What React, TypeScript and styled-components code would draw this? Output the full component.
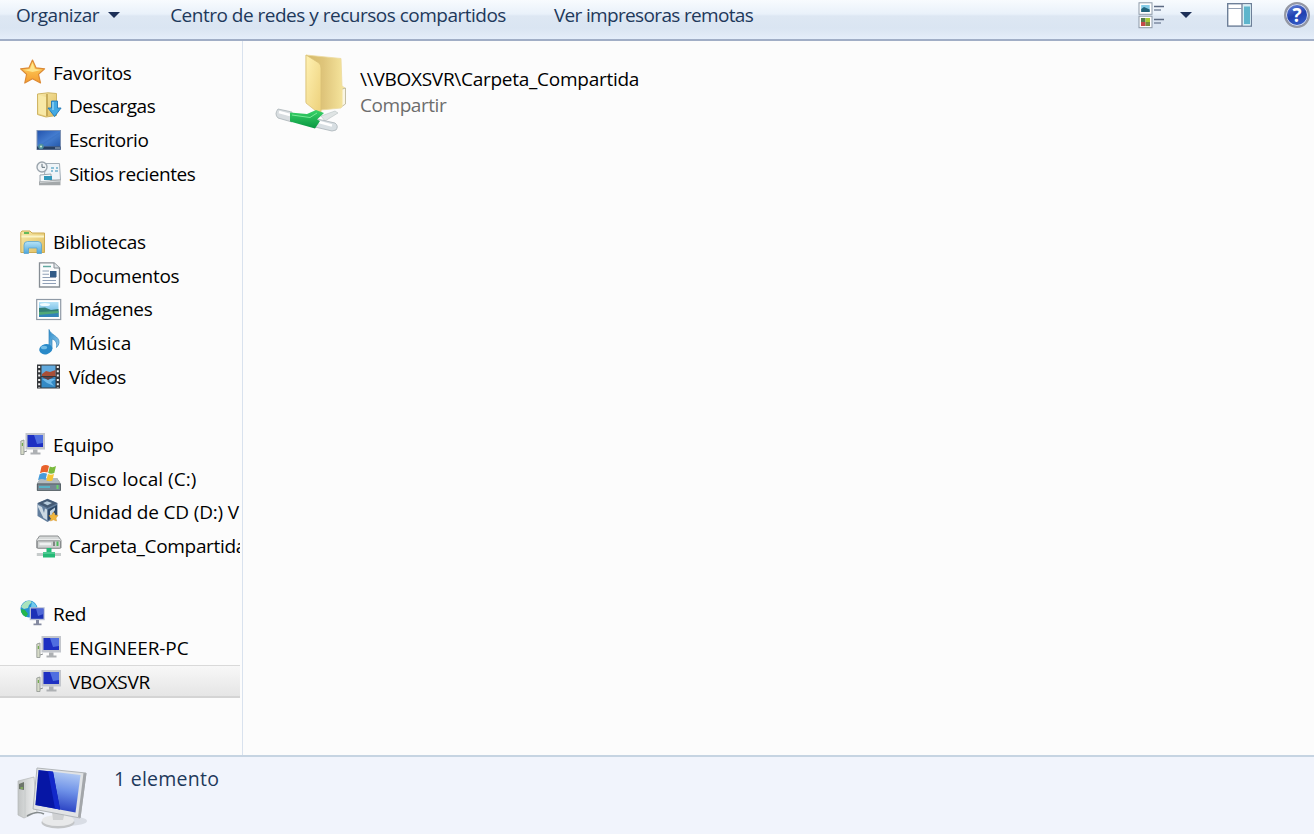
import React from 'react';
import styled, { createGlobalStyle } from 'styled-components';

const Global = createGlobalStyle`
  html, body { margin: 0; padding: 0; overflow: hidden; }
  body { font-family: "Open Sans", "Noto Sans", sans-serif; font-size: 19px; background: #fcfcfc; }
  * { box-sizing: border-box; }
`;

const Window = styled.div`
  display: flex;
  flex-direction: column;
  height: 834px;
  width: 1314px;
  background: #fcfcfc;
  overflow: hidden;
`;

const Toolbar = styled.header`
  display: flex;
  align-items: center;
  height: 41px;
  flex: none;
  padding: 0 4px 9px 16px;
  border-bottom: 2px solid #a1aec6;
  background: linear-gradient(#f8fbfe 0, #e9f1fa 14px, #dde7f3 16px, #dae5f2 28px, #e2ebf7 36px, #e4eefb 39px);
  color: #1e395b;
`;

const Command = styled.div<{ $track: number; $gap: number }>`
  display: flex;
  align-items: center;
  white-space: nowrap;
  line-height: 30px;
  letter-spacing: ${p => p.$track}px;
  margin-right: ${p => p.$gap}px;
`;

const Caret = styled.span<{ $left: number }>`
  width: 0;
  height: 0;
  margin-left: ${p => p.$left}px;
  border: 6px solid transparent;
  border-top-color: #1c2f57;
  border-bottom: 0;
`;

const Tools = styled.div`
  display: flex;
  align-items: center;
  margin-left: auto;
`;

const ToolButton = styled.div<{ $gap: number }>`
  display: flex;
  margin-right: ${p => p.$gap}px;
`;

const Body = styled.div`
  display: flex;
  flex: 1;
  min-height: 0;
`;

const Sidebar = styled.nav`
  width: 243px;
  flex: none;
  border-right: 1px solid #d9e2ee;
  padding: 14.7px 2px 0 0;
`;

const Group = styled.section`
  padding-bottom: 33.84px;
`;

const Row = styled.div<{ $child?: boolean; $selected?: boolean }>`
  display: flex;
  align-items: center;
  height: 33.84px;
  padding-left: ${p => (p.$child ? 36 : 20)}px;
  overflow: hidden;
  color: #000;
  ${p => p.$selected && `
    background: linear-gradient(#f8f8f8, #e4e4e4);
    box-shadow: inset 0 1px #d9d9d9, inset 0 -2px #d4d4d4;
  `}
`;

const IconBox = styled.span`
  display: flex;
  width: 26px;
  height: 26px;
  flex: none;
  margin: 0 7px 2px 0;
`;

const Label = styled.span<{ $track: number }>`
  white-space: nowrap;
  line-height: 26px;
  letter-spacing: ${p => p.$track}px;
`;

const Content = styled.main`
  flex: 1;
  padding: 12px 0 0 32px;
`;

const ShareItem = styled.div`
  display: flex;
  gap: 13px;
`;

const ShareText = styled.div`
  display: flex;
  flex-direction: column;
  padding-top: 13px;
`;

const Muted = styled(Label)`
  color: #6d6d6d;
`;

const Details = styled.footer`
  display: flex;
  height: 79px;
  flex: none;
  gap: 25px;
  padding: 9px 0 0 17px;
  border-top: 2px solid #c6d4e2;
  background: #f1f4fc;
  color: #1e395b;
  font-size: 19.5px;
`;

type IconName =
  | 'star' | 'downloads' | 'desktop' | 'recent' | 'libraries' | 'document' | 'picture'
  | 'music' | 'video' | 'computer' | 'disk' | 'cd' | 'netdrive' | 'network';

const drawings: Record<IconName, React.ReactNode> = {
  star: (
    <>
      <path d="M12.5 1 16 8.8 24.6 9.8 18.5 15.4 20.5 24 12.5 19.8 4.8 24 6.6 15.4.6 9.8 9 8.8Z" fill="url(#gStar)" stroke="#dc8a35" strokeWidth="1.2" strokeLinejoin="round" />
      <path d="M12.5 4 14.8 10 21 11 12.5 13 4 11 10 10Z" fill="#ffee9b" opacity=".8" />
    </>
  ),
  downloads: (
    <>
      <path d="M1.5 2 12 .8 20.5 1.5V23.5L10 25 1.5 22.5Z" fill="url(#gFold)" stroke="#cfb565" />
      <path d="M11 2v22" stroke="#bd9f4c" strokeWidth="1.5" />
      <path d="M2.5 3 10 5V24L2.5 21.5Z" fill="#f8e9a7" />
      <path d="M15.5 9h6v7h3.6L18.6 24.6 12 16h3.5Z" fill="#43a9e3" stroke="#2277b5" strokeWidth=".9" />
      <path d="M17 10v8" stroke="#a0ddf8" strokeWidth="1.2" />
    </>
  ),
  desktop: (
    <>
      <rect x=".5" y="4" width="24.5" height="20" fill="#7e92b4" />
      <rect x="1.5" y="5" width="22.5" height="15.5" fill="url(#gDesk)" />
      <path d="M1.5 20.5 24 6V20.5Z" fill="#1e4f9f" opacity=".2" />
      <rect x="1" y="20.5" width="23.5" height="3" fill="#273f61" />
      <circle cx="5" cy="20.5" r="2.8" fill="#4d8e9d" />
      <circle cx="5" cy="20.5" r="1.1" fill="#c4e5c9" />
      <path d="M19 22h5" stroke="#a7bbcf" />
    </>
  ),
  recent: (
    <>
      <path d="M9.5 3.5H23.5L24.5 20H8Z" fill="#eef4f8" stroke="#a3aeb7" />
      <path d="M15 8h3M20 8h2M15 11h2M19 11h3" stroke="#6caecb" strokeWidth="1.6" />
      <path d="M4 15 15 14V22H4Z" fill="#f4f8fa" stroke="#9ca7ae" />
      <path d="M8 16h8v4H8Z" fill="#3398ba" />
      <path d="M3 21.5 24.5 19.5V25.3H3Z" fill="#a3a8aa" />
      <path d="M4 22.3 24 21" stroke="#d8dcde" />
      <circle cx="6" cy="7" r="5" fill="#f1f4f6" stroke="#9ba5ad" strokeWidth="1.4" />
      <path d="M6 3.8V7.3H9" fill="none" stroke="#5c6d79" />
    </>
  ),
  libraries: (
    <>
      <path d="M.8 4.5 2 3H10L12 5H24.5V24.5H.8Z" fill="url(#gFold)" stroke="#cdab52" />
      <path d="M4 5H9" stroke="#64b95a" strokeWidth="2" />
      <path d="M1.5 8.5H24" stroke="#fbf4c7" strokeWidth="2" />
      <path d="M4 25.5V17Q4 13.5 7.5 13.5H18Q21.5 13.5 21.5 17V25.5H17V20H8.5V25.5Z" fill="url(#gSky)" stroke="#5ba4cf" strokeWidth=".8" />
    </>
  ),
  document: (
    <>
      <path d="M3.5.8H18L23.5 6V25H3.5Z" fill="#fbfcfd" stroke="#868d94" strokeWidth="1.3" />
      <path d="M18 1V6H23.5" fill="#e2e8eb" stroke="#868d94" />
      <path d="M7 4.5H15" stroke="#61a8a0" strokeWidth="1.5" />
      <path d="M6.5 9H13M6.5 12.3H13M6.5 15.5H20M6.5 18.5H20M6.5 21.5H20" stroke="#8f9fb6" strokeWidth="1.1" />
      <rect x="14" y="9" width="6.5" height="6" fill="#315b87" />
    </>
  ),
  picture: (
    <>
      <rect x=".7" y="4.5" width="24" height="20" fill="#fff" stroke="#8f9aa6" strokeWidth="1.2" />
      <rect x="3" y="7" width="19.5" height="15" fill="url(#gSky)" />
      <path d="M3 13 9 12.5 15 15 22.5 14V18H3Z" fill="#347f77" />
      <path d="M3 17 22.5 16V22H3Z" fill="#50a777" />
      <path d="M3 20 22.5 18V22H3Z" fill="#3384b8" />
      <ellipse cx="9" cy="9.5" rx="5" ry="1.5" fill="#f1fbff" />
    </>
  ),
  music: (
    <>
      <path d="M13 .5C14.5 6 23.5 7 23 13.5C22.8 15.5 22 17 20.5 18.5C21.3 13.5 19.5 11 16 10V20H13Z" fill="url(#gNote)" stroke="#3585ba" strokeWidth=".7" />
      <ellipse cx="9.8" cy="20.2" rx="6.6" ry="5.1" transform="rotate(-14 9.8 20.2)" fill="#2989c8" />
      <ellipse cx="8" cy="18.5" rx="3.2" ry="1.8" fill="#83c9ee" opacity=".8" />
    </>
  ),
  video: (
    <>
      <rect x="1" y="1.5" width="23" height="24" fill="#35383c" />
      <rect x="5.5" y="2.5" width="14" height="10.5" fill="#60a9dd" />
      <rect x="5.5" y="14" width="14" height="10.5" fill="#348ac5" />
      <path d="M6 11 10 8 14 9 19.5 7V13H6Z" fill="#a84f38" />
      <path d="M6 16H19.5L15 19 18 23 11 20Z" fill="#70b9e7" />
      <path d="M6 14H18L12 17Z" fill="#623e41" />
      <path d="M3.2 3V25M21.8 3V25" stroke="#f4f4f4" strokeWidth="2" strokeDasharray="2 2.3" />
    </>
  ),
  computer: (
    <>
      <path d="M.8 10 4 9V23.5H.8Z" fill="#d6dbc8" stroke="#8f9590" strokeWidth=".8" />
      <path d="M2.4 12v3" stroke="#72ab4f" strokeWidth="1.2" />
      <path d="M5.5 2H25V18.5H5.5Z" fill="#c3c6cc" />
      <rect x="7.5" y="4" width="15.5" height="12" fill="#1e30c2" />
      <path d="M14 4H23V12L17 13Z" fill="#6489ec" opacity=".7" />
      <path d="M13 18.5H17.5V21.5H20.5V23.5H10.5V21.5H13Z" fill="#adb0b3" />
      <path d="M4 21 7 20" stroke="#8d9192" />
    </>
  ),
  disk: (
    <>
      <path d="M4.5 13H21L25 19V25.5H.8V19Z" fill="#727b80" />
      <path d="M4.5 13H21L24.5 18.5H1Z" fill="#b3bbc0" />
      <rect x="1.5" y="19" width="23" height="6.5" fill="#768794" stroke="#4d575c" strokeWidth=".7" />
      <path d="M3 22H14" stroke="#55b7cc" strokeWidth="1.8" />
      <path d="M21.5 20v4" stroke="#68d26b" strokeWidth="2" />
      <path d="M5.5 1.5Q9.5-1 13 1L11.5 7.5Q8 6 4 8.3Z" fill="#e8622b" />
      <path d="M13.8 1.5Q17 3 20 1L18.3 8Q15 9.5 12.2 8Z" fill="#7aba3d" />
      <path d="M3.6 9.2Q7.5 7 11 8.7L9.5 15Q5.7 12.7 2 15.3Z" fill="#459bda" />
      <path d="M11.9 9Q15 10.5 18 9L16.4 15.5Q14 17 10.4 15.5Z" fill="#f6c434" />
    </>
  ),
  cd: (
    <>
      <path d="M11.5.8 21.5 5V18L11.5 24 1.5 18V5Z" fill="#627e9d" />
      <path d="M11.5 1 21.3 5.3 11.5 10 1.6 5.3Z" fill="#455b75" />
      <path d="M7 5 11 3.3 16 5 11.5 7.3Z" fill="#b8cddd" />
      <path d="M2 7 6 9 8 15 9 10.5 11 11.5V22L7.5 20 2 9Z" fill="#cbd9e4" />
      <path d="M12 11.5 21 7V17L12 22.5Z" fill="#2d4868" />
      <path d="M14 13 19 9.5V12L16 16 19 15V17L14 20Z" fill="#c2d3e0" />
      <path d="M17.5 14 19 17 22 17.5 20 20 20.5 23 17.5 21.8 14.5 23 15 20 13 17.5 16 17Z" fill="#f0b63c" stroke="#d79429" strokeWidth=".5" />
    </>
  ),
  netdrive: (
    <>
      <path d="M3.5 4H22L25 8V16H.8V8Z" fill="#d6d9d9" stroke="#8b8f90" />
      <path d="M1.5 8H24.5" stroke="#fff" />
      <rect x="1.3" y="8.8" width="23.2" height="7.4" rx="1" fill="#cfd2d2" stroke="#777b7c" strokeWidth=".8" />
      <path d="M3.5 12H15" stroke="#eff1f1" strokeWidth="2.5" />
      <path d="M18 9.5V14" stroke="#565b58" strokeWidth="1.3" />
      <path d="M21.5 9.5V14" stroke="#4abb5d" strokeWidth="2" />
      <path d="M10.5 16H15.5V20H19V25.5H7V20H10.5Z" fill="#24b976" />
      <path d="M.8 22.5H7M19 22.5H25" stroke="#c7cccc" strokeWidth="3" />
      <path d="M7 21H19" stroke="#74dcac" />
    </>
  ),
  network: (
    <>
      <circle cx="9" cy="9" r="8.5" fill="#2491d4" />
      <path d="M5 2Q9-.5 12 2L9 5 8 8 4 9 1 7Q2 4 5 2Z" fill="#a9e3bd" />
      <path d="M1 9 5 10 8 14 6 17Q1 15 1 9Z" fill="#25b64c" />
      <path d="M12 1.5Q16 4 16.5 7H11Z" fill="#70c9eb" />
      <rect x="9.7" y="7.2" width="15" height="13" fill="#b8bfd4" />
      <rect x="11" y="8.5" width="12.5" height="10.3" fill="#1b30b7" />
      <path d="M16 8.5H23.5V14L18 16Z" fill="#5b76df" opacity=".8" />
      <path d="M16 20H19V23.5H21.5V25.3H13.5V23.5H16Z" fill="#848aa0" />
    </>
  ),
};

function Icon({ name }: { name: IconName }) {
  return (
    <IconBox>
      <svg width="26" height="26" viewBox="0 0 26 26">{drawings[name]}</svg>
    </IconBox>
  );
}

function Gradients() {
  return (
    <svg width="0" height="0" display="block">
      <defs>
        <linearGradient id="gStar" x2="0" y2="1"><stop stopColor="#ffdc6b" /><stop offset="1" stopColor="#f59a2c" /></linearGradient>
        <linearGradient id="gFold" x2="1" y2="1"><stop stopColor="#f7e9a9" /><stop offset="1" stopColor="#e0bd5e" /></linearGradient>
        <linearGradient id="gDesk" x2="1" y2="1"><stop stopColor="#2455ae" /><stop offset=".6" stopColor="#4a83d5" /><stop offset="1" stopColor="#275cad" /></linearGradient>
        <linearGradient id="gSky" x2="0" y2="1"><stop stopColor="#b7e3f7" /><stop offset="1" stopColor="#4ca6dc" /></linearGradient>
        <linearGradient id="gNote" x2="1" y2="1"><stop stopColor="#2b8bc9" /><stop offset="1" stopColor="#98cdee" /></linearGradient>
      </defs>
    </svg>
  );
}

function ViewIcon() {
  return (
    <svg width="27" height="27" viewBox="0 0 27 27">
      <rect x="1" y=".8" width="13" height="11.5" fill="#fff" stroke="#8d99a8" />
      <rect x="3.2" y="3" width="8.5" height="7" fill="#86cce8" />
      <path d="M3.2 7 6 5 11.7 7.5V10H3.2Z" fill="#24647b" />
      <rect x="1" y="14.2" width="13" height="11.5" fill="#fff" stroke="#8d99a8" />
      <rect x="3" y="16" width="4.5" height="4" fill="#557b4e" />
      <rect x="7.5" y="16" width="4.5" height="4" fill="#a7cc32" />
      <rect x="3" y="20" width="4.5" height="4" fill="#c44a49" />
      <rect x="7.5" y="20" width="4.5" height="4" fill="#7b8b3d" />
      <path d="M16 4.5H26M16 17.5H26" stroke="#5c6a82" strokeWidth="1.3" />
      <path d="M16 8H23M16 21H23" stroke="#7f8ca2" strokeWidth="1.3" />
    </svg>
  );
}

function PaneIcon() {
  return (
    <svg width="25" height="24" viewBox="0 0 25 24">
      <rect x=".7" y=".7" width="23.6" height="22.4" fill="#fff" stroke="#6d7f98" strokeWidth="1.4" />
      <path d="M1 5.5H14.5" stroke="#95a2b5" />
      <rect x="15.5" y="1.4" width="8.2" height="21" fill="#d5eef5" />
      <rect x="17" y="3.5" width="6" height="17.5" fill="#5eb5cc" />
      <path d="M15 1V23" stroke="#6d7f98" strokeWidth="1.3" />
    </svg>
  );
}

const HelpBadge = styled.span`
  display: flex;
  align-items: center;
  justify-content: center;
  width: 26px;
  height: 26px;
  border: 2px solid #9598a2;
  border-radius: 50%;
  background: linear-gradient(160deg, #6c8be0, #1f40b0 50%, #3f67d0);
  box-shadow: inset 0 0 0 1px #d2d8e8;
  color: #fff;
  font-weight: 700;
  font-size: 19px;
  line-height: 22px;
`;

function SharedFolder() {
  return (
    <svg width="72" height="80" viewBox="0 0 72 80">
      <defs>
        <linearGradient id="fBack"><stop stopColor="#d5ba68" /><stop offset=".45" stopColor="#dfc57b" /><stop offset="1" stopColor="#f7e79f" /></linearGradient>
        <linearGradient id="fFront" x2="1" y2="1"><stop stopColor="#fff1b2" /><stop offset="1" stopColor="#ecd07a" /></linearGradient>
        <linearGradient id="fGreen" x2="0" y2="1"><stop stopColor="#3bd369" /><stop offset="1" stopColor="#079640" /></linearGradient>
      </defs>
      <path d="M31 2 66 5.5 67 33 70 35V50L66 55 46 57 31 49Z" fill="url(#fBack)" stroke="#ecdba0" strokeWidth=".8" />
      <path d="M31 2 44 10Q46 12 46 15V62L31 50Z" fill="url(#fFront)" stroke="#d9c077" strokeWidth=".8" />
      <path d="M67.5 36 70.5 35V51L67.5 53" fill="#faf6e3" stroke="#b7b194" strokeWidth=".8" />
      <path d="M46 63 60 58 63 60 50 68Z" fill="#dfe4e4" stroke="#b9c2c2" strokeWidth=".6" />
      <path d="M3 56 17 59V69L3 65Q-1 61 3 56Z" fill="#d8dde0" stroke="#aab2b6" strokeWidth=".8" />
      <path d="M4 59 15 62" stroke="#fff" strokeWidth="2.5" />
      <path d="M42 66 60 70Q64 73 61 77L57 78 40 74Z" fill="#d8dfe3" stroke="#aab3b8" strokeWidth=".8" />
      <path d="M44 69 57 72.5" stroke="#fff" strokeWidth="2.5" />
      <path d="M15 59.5 32 61 41 57 49 60 42 66.5 45 68 40 75.5 15 68.5Z" fill="url(#fGreen)" />
      <path d="M17 62 35 64.5 42 60" fill="none" stroke="#79eb98" strokeWidth="1" />
    </svg>
  );
}

function LargeComputer() {
  return (
    <svg width="72" height="66" viewBox="0 0 72 66">
      <defs>
        <linearGradient id="scr" x1=".6" x2=".4" y2="1"><stop stopColor="#b4cdf5" /><stop offset=".45" stopColor="#6f92e8" /><stop offset="1" stopColor="#1f36bd" /></linearGradient>
        <linearGradient id="case"><stop stopColor="#c3c6c6" /><stop offset="1" stopColor="#f1f2f2" /></linearGradient>
      </defs>
      <ellipse cx="50" cy="55" rx="20" ry="5" fill="#d9dde5" />
      <path d="M1 15 17 11 20 46 7 52 1 49Z" fill="url(#case)" stroke="#b4b8b8" strokeWidth=".7" />
      <path d="M2 18 7 16V24L2 23Z" fill="#6d756a" />
      <path d="M3.5 22H6" stroke="#8abf57" strokeWidth="1.4" />
      <path d="M8 17V51" stroke="#c7caca" />
      <path d="M10 50Q20 44 27 48" fill="none" stroke="#858b8d" strokeWidth="1.5" />
      <ellipse cx="41" cy="56.5" rx="16.5" ry="6" fill="#c3c5c7" />
      <ellipse cx="41" cy="54.5" rx="16" ry="5.5" fill="#e8e9ea" />
      <path d="M35 46H48L46 54H36Z" fill="#cfd1d3" />
      <path d="M20 2 69 7 63 52 16 43Z" fill="#e1e3e5" stroke="#b2b6b9" />
      <path d="M66.5 7 69.5 7.2 63.5 52 61 51Z" fill="#a3a6aa" />
      <path d="M21.5 4 63.5 9 58.5 46.5 18.5 39Z" fill="url(#scr)" />
      <path d="M21.5 4 36 5.8 43 43.6 18.5 39Z" fill="#0616a5" />
      <path d="M31 5 36 5.8 43 43.6 38 42.4Z" fill="#1228c9" />
    </svg>
  );
}

type Entry = { icon: IconName; text: string; track: number; selected?: boolean };

const groups: Entry[][] = [
  [
    { icon: 'star', text: 'Favoritos', track: -0.28 },
    { icon: 'downloads', text: 'Descargas', track: -0.52 },
    { icon: 'desktop', text: 'Escritorio', track: -0.4 },
    { icon: 'recent', text: 'Sitios recientes', track: -0.44 },
  ],
  [
    { icon: 'libraries', text: 'Bibliotecas', track: -0.28 },
    { icon: 'document', text: 'Documentos', track: -0.28 },
    { icon: 'picture', text: 'Imágenes', track: -0.3 },
    { icon: 'music', text: 'Música', track: 0 },
    { icon: 'video', text: 'Vídeos', track: -0.3 },
  ],
  [
    { icon: 'computer', text: 'Equipo', track: -0.15 },
    { icon: 'disk', text: 'Disco local (C:)', track: 0.03 },
    { icon: 'cd', text: 'Unidad de CD (D:) V', track: -0.17 },
    { icon: 'netdrive', text: 'Carpeta_Compartida', track: -0.33 },
  ],
  [
    { icon: 'network', text: 'Red', track: -0.3 },
    { icon: 'computer', text: 'ENGINEER-PC', track: -0.1 },
    { icon: 'computer', text: 'VBOXSVR', track: -0.25, selected: true },
  ],
];

export default function App() {
  return (
    <Window>
      <Global />
      <Gradients />
      <Toolbar>
        <Command $track={-0.44} $gap={50.5}>Organizar<Caret $left={8.5} /></Command>
        <Command $track={-0.5} $gap={48}>Centro de redes y recursos compartidos</Command>
        <Command $track={-0.66} $gap={0}>Ver impresoras remotas</Command>
        <Tools>
          <ToolButton $gap={15}><ViewIcon /></ToolButton>
          <ToolButton $gap={35}><Caret $left={0} /></ToolButton>
          <ToolButton $gap={32}><PaneIcon /></ToolButton>
          <HelpBadge>?</HelpBadge>
        </Tools>
      </Toolbar>
      <Body>
        <Sidebar>
          {groups.map(entries => (
            <Group key={entries[0].text}>
              {entries.map((e, i) => (
                <Row key={e.text} $child={i > 0} $selected={e.selected}>
                  <Icon name={e.icon} />
                  <Label $track={e.track}>{e.text}</Label>
                </Row>
              ))}
            </Group>
          ))}
        </Sidebar>
        <Content>
          <ShareItem>
            <SharedFolder />
            <ShareText>
              <Label $track={-0.27}>{'\\\\VBOXSVR\\Carpeta_Compartida'}</Label>
              <Muted $track={-0.45}>Compartir</Muted>
            </ShareText>
          </ShareItem>
        </Content>
      </Body>
      <Details>
        <LargeComputer />
        <Label $track={0.25}>1 elemento</Label>
      </Details>
    </Window>
  );
}
